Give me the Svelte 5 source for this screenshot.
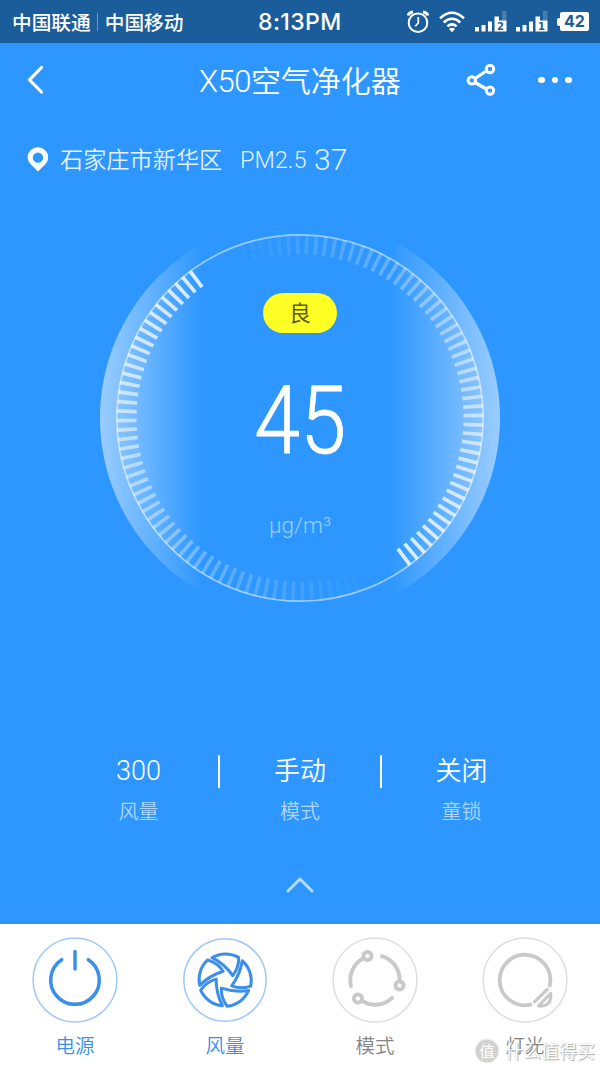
<script>
	const stats = [
		{ value: '300', label: '风量' },
		{ value: '手动', label: '模式' },
		{ value: '关闭', label: '童锁' }
	];

	const tabs = [
		{ icon: 'power', label: '电源', active: true },
		{ icon: 'fan', label: '风量', active: true },
		{ icon: 'mode', label: '模式', active: false },
		{ icon: 'light', label: '灯光', active: false }
	];

	// two half turns of ticks, each one fading out counterclockwise
	const ticks = [];
	for (let i = 0; i < 120; i++) {
		const turn = (i % 60) * 3;
		ticks.push({
			angle: -36.8 - i * 3,
			opacity: 0.82 * Math.max(0, 1 - turn / 165)
		});
	}
</script>

<svelte:head>
	<title>X50空气净化器</title>
</svelte:head>

<main>
	<div class="status">
		<div class="carrier"><span>中国联通</span><i></i><span>中国移动</span></div>
		<div class="clock">8:13PM</div>
		<svg class="alarm" width="24" height="24" viewBox="0 0 24 24" fill="none" stroke="#fff">
			<circle cx="12" cy="12.7" r="9.3" stroke-width="2" />
			<path d="M12.3 7v6l-3 3.3" stroke-width="1.7" />
			<path d="M2.200 5.500Q3 2.400 7 2M21.800 5.500Q21 2.400 17 2" stroke-width="3" />
		</svg>
		<svg class="wifi" width="26" height="22" viewBox="0 0 26 22" fill="none" stroke="#fff" stroke-width="2.500">
			<path d="M1 7.300Q13-3.800 25 7.300M4.700 11.500Q13 4 21.300 11.500M8.300 15.400Q13 11.300 17.700 15.400" />
			<path d="M10 18q3-2.300 6 0l-3 3.300z" fill="#fff" stroke="none" />
		</svg>
		{#each ['2', '1'] as sim}
			<div class="signal">
				<svg width="32" height="21" viewBox="0 0 32 21" fill="#fff">
					<path d="M0 16h4v4.500H0zM6.500 14h4v6.500h-4zM13 10.500h4v10h-4zM19.500 5.500h4.500v4h7.500v11h-12z" />
					<path d="M27 0h4.500v9.500H27z" opacity=".2" />
				</svg>
				<b>{sim}</b>
			</div>
		{/each}
		<div class="battery"><span>42</span></div>
	</div>

	<header>
		<svg class="back" width="20" height="30" viewBox="0 0 20 30" fill="none" stroke="#fff" stroke-width="3.200" stroke-linecap="round" stroke-linejoin="round">
			<path d="M16.500 2.500L4.500 14.800L16.500 27" />
		</svg>
		<h1><span>X50</span>空气净化器</h1>
		<svg class="share" width="32" height="34" viewBox="0 0 32 34" fill="none" stroke="#fff" stroke-width="3">
			<path d="M11 15.500L21.500 8.500M11 19.500L21.500 25.500" stroke-width="3.200" />
			<circle cx="7.800" cy="17.400" r="3.700" />
			<circle cx="26" cy="6" r="3.700" />
			<circle cx="26" cy="27.600" r="3.700" />
		</svg>
		<div class="more"><i></i><i></i><i></i></div>
	</header>

	<div class="place">
		<svg width="22" height="26" viewBox="0 0 22 26" fill="none">
			<path d="M11 24.500L3.500 17Q.600 13.900.600 10.500A10.300 10.200 0 0 1 21.200 10.500Q21.200 13.900 18.500 17zM11 15.800a5.200 5.200 0 1 0 0-10.400a5.200 5.200 0 1 0 0 10.400z" fill="#fff" fill-rule="evenodd" />
		</svg>
		<span class="city">石家庄市新华区</span>
		<span class="pm">PM2.5</span>
		<span class="num">37</span>
	</div>

	<section class="gauge">
		<svg width="400" height="400" viewBox="-200 -200 400 400">
			<defs>
				<linearGradient id="glow" gradientUnits="userSpaceOnUse" x1="-200" y1="0" x2="200" y2="0">
					<stop offset="0" stop-color="#fff" stop-opacity=".52" />
					<stop offset=".255" stop-color="#fff" stop-opacity="0" />
					<stop offset=".725" stop-color="#fff" stop-opacity="0" />
					<stop offset="1" stop-color="#fff" stop-opacity=".52" />
				</linearGradient>
			</defs>
			<circle r="200" fill="url(#glow)" />
			<circle r="183.200" fill="none" stroke="#fff" stroke-opacity=".5" stroke-width="1.700" />
			{#each ticks as tick}
				<path d="M0-183.500V-163.500" stroke="#fff" stroke-width="3.700" stroke-opacity={tick.opacity} transform="rotate({tick.angle})" />
			{/each}
		</svg>
		<div class="reading">
			<div class="grade">良</div>
			<div class="value">45</div>
			<div class="unit">μg/m³</div>
		</div>
	</section>

	<div class="stats">
		{#each stats as stat}
			<div class="stat">
				<strong>{stat.value}</strong>
				<span>{stat.label}</span>
			</div>
		{/each}
	</div>

	<svg class="up" width="30" height="20" viewBox="0 0 30 20" fill="none" stroke="#fff" stroke-opacity=".65" stroke-width="3" stroke-linecap="round" stroke-linejoin="round">
		<path d="M3 16L15 4L27 16" />
	</svg>

	<nav>
		{#each tabs as tab}
			<div class="tab" class:active={tab.active}>
				<svg width="86" height="86" viewBox="-43 -43 86 86" fill="none" stroke="currentColor" stroke-linecap="round" stroke-linejoin="round">
					<circle class="rim" r={tab.icon === 'fan' ? 41.2 : 42} stroke-width="1.500" />
					{#if tab.icon === 'power'}
						<path d="M0-28.500V-11M-13.300-20.300A24.300 24.300 0 1 0 13.300-20.300" stroke-width="3.500" />
					{:else if tab.icon === 'fan'}
						{#each [0, 72, 144, 216, 288] as turn}
							<path d="M-13-22.300A26.300 26.300 0 0 1 13.700-22.600Q14-12 7.700-4.500Q-1-16.500-13-22.300z" stroke-width="3" transform="rotate({turn})" />
						{/each}
					{:else if tab.icon === 'mode'}
						{#each [0, 120, 240] as turn}
							<g transform="rotate({turn})" stroke-width="3.900">
								<circle cx="-7.500" cy="-24" r="4.100" />
								<path d="M-12-21.500A24.500 24.500 0 0 0-24 6" />
							</g>
						{/each}
					{:else}
						<path d="M5.500 24.700A25.300 25.300 0 1 1 24.700 5.500" stroke-width="3.800" />
						<path d="M9.500 21.800L22.200 9.500M13.500 25.800L25.500 13.500Q27 20 22.500 24Q18 27 13.500 25.800z" stroke-width="3.200" />
					{/if}
				</svg>
				<span>{tab.label}</span>
			</div>
		{/each}
	</nav>

	<div class="mark"><b>值</b><span>什么值得买</span></div>
</main>

<style>
	:global(body) {
		margin: 0;
		background: #fff;
	}

	main {
		position: relative;
		width: 600px;
		height: 1067px;
		overflow: hidden;
		display: flex;
		flex-direction: column;
		background: #2d97ff;
		color: #fff;
		font-family: Roboto, 'Noto Sans CJK SC', sans-serif;
		font-weight: 350;
	}

	svg {
		display: block;
		flex: none;
	}

	.status {
		display: flex;
		align-items: center;
		height: 43px;
		flex: none;
		padding: 0 3px 0 12px;
		box-sizing: border-box;
		background: #1b5d9b;
	}
	.carrier {
		display: flex;
		align-items: center;
		width: 246px;
		font: 500 19.700px 'Noto Sans CJK SC', sans-serif;
		line-height: 43px;
	}
	.carrier i {
		width: 1px;
		height: 18px;
		margin: 0 7px 0 6px;
		background: #6e9ac2;
	}
	.clock {
		width: 148px;
		font: 500 23px Inter, sans-serif;
		line-height: 45px;
		letter-spacing: 0.4px;
		padding-top: 2px;
	}
	.wifi {
		margin: 0 10px 0 9px;
	}
	.signal {
		position: relative;
		margin-right: 9px;
	}
	.signal b {
		position: absolute;
		right: 3px;
		bottom: 0;
		color: #1b5d9b;
		font: 800 10px/10px 'DejaVu Sans', sans-serif;
	}
	.battery {
		display: flex;
		align-items: center;
	}
	.battery::before {
		content: '';
		width: 3px;
		height: 8px;
		border-radius: 2px 0 0 2px;
		background: #fff;
	}
	.battery span {
		width: 29px;
		border-radius: 2px;
		background: #fff;
		color: #1b5d9b;
		text-align: center;
		font: 700 16px/19px Inter, sans-serif;
	}

	header {
		display: flex;
		align-items: center;
		height: 74px;
		flex: none;
		padding: 0 28px 0 25px;
	}
	h1 {
		width: 265px;
		margin: 0 0 0 154px;
		padding-top: 3px;
		font-size: 30px;
		line-height: 74px;
		font-weight: 350;
		white-space: nowrap;
	}
	h1 span {
		font-size: 31px;
		letter-spacing: -0.5px;
	}
	.more {
		display: flex;
		gap: 7px;
		margin-left: 42px;
	}
	.more i {
		width: 6.500px;
		height: 6.500px;
		border-radius: 50%;
		background: #fff;
	}

	.place {
		display: flex;
		align-items: center;
		height: 85px;
		flex: none;
		padding-left: 27px;
		color: #e4f2ff;
		line-height: 86px;
	}
	.city {
		width: 180px;
		margin-left: 11px;
		font-size: 23.200px;
	}
	.pm {
		width: 74px;
		font-size: 23.500px;
	}
	.num {
		font-size: 30px;
	}

	.gauge {
		display: grid;
		justify-content: center;
		flex: none;
		height: 400px;
		margin-top: 16px;
	}
	.gauge > * {
		grid-area: 1 / 1;
	}
	.reading {
		display: flex;
		flex-direction: column;
		align-items: center;
		padding-top: 75px;
	}
	.grade {
		width: 74px;
		height: 40px;
		border-radius: 20px;
		background: #ffff26;
		color: #5b5b10;
		text-align: center;
		font-size: 22px;
		font-weight: 400;
		line-height: 41px;
	}
	.value {
		margin-top: 33px;
		font-size: 94px;
		font-weight: 300;
		line-height: 110px;
		transform: scaleX(0.88);
		-webkit-text-stroke: 0.8px #fff;
	}
	.unit {
		margin-top: 34px;
		color: #9bcdff;
		font-size: 22.500px;
		line-height: 30px;
	}

	.stats {
		display: flex;
		justify-content: center;
		flex: none;
		margin-top: 137px;
	}
	.stat {
		position: relative;
		display: flex;
		flex-direction: column;
		align-items: center;
		width: 161.500px;
	}
	.stat + .stat::before {
		content: '';
		position: absolute;
		left: -1px;
		top: 0;
		width: 2px;
		height: 33px;
		background: #fff;
	}
	.stat strong {
		font-size: 26px;
		font-weight: 350;
		line-height: 33px;
	}
	.stat:first-child strong {
		font-size: 27px;
	}
	.stat span {
		margin-top: 9px;
		color: #add6ff;
		font-size: 20px;
		line-height: 31px;
	}

	.up {
		margin: 47px auto 0;
	}

	nav {
		display: flex;
		height: 143px;
		flex: none;
		margin-top: auto;
		background: #fff;
	}
	.tab {
		display: flex;
		flex-direction: column;
		align-items: center;
		width: 150px;
		padding-top: 13px;
		color: #c9c9c9;
	}
	.tab .rim {
		stroke: #dedede;
	}
	.tab span {
		margin-top: 9px;
		color: #858585;
		font-size: 19.500px;
		line-height: 30px;
	}
	.tab.active {
		color: #3b8eea;
	}
	.tab.active .rim {
		stroke: #9ec8f8;
	}
	.tab.active span {
		color: #3b8eea;
	}

	.mark {
		position: absolute;
		right: 5px;
		bottom: 3px;
		display: flex;
		align-items: center;
		gap: 7px;
		color: #fff;
		text-shadow: 1px 1px 1px #aaa, 0 0 1px #bbb;
		font: 400 18px/27px 'Noto Sans CJK SC', sans-serif;
	}
	.mark b {
		width: 22px;
		height: 22px;
		border-radius: 50%;
		background: #d2d2d2;
		box-shadow: 0 0 2px #aaa;
		text-align: center;
		text-shadow: none;
		font-size: 15px;
		font-weight: 400;
		line-height: 21px;
	}
</style>
